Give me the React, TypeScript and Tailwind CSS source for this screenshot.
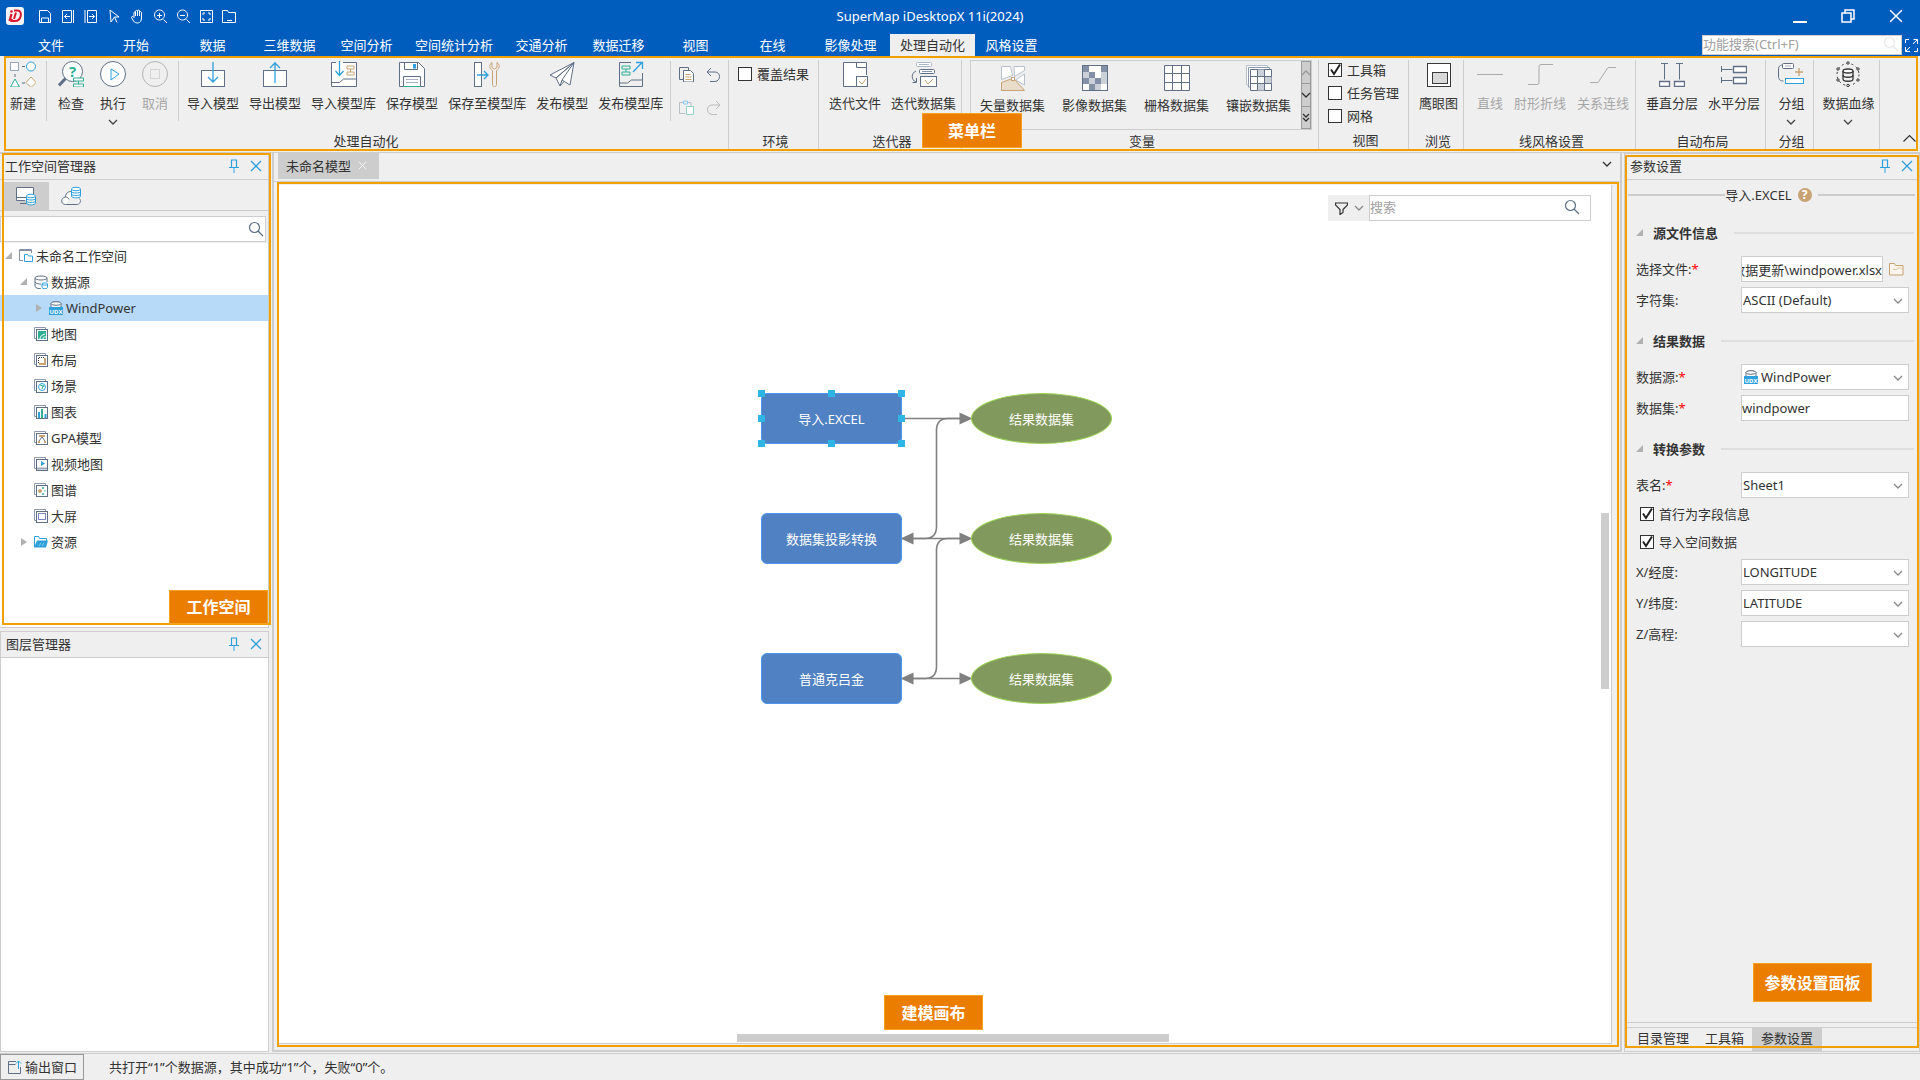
import React, { useState } from 'react'

const SLATE = '#5f6f86'
const BLUE = '#2ea0dc'
const GREEN = '#2fae94'
const TAN = '#c9a273'

interface SvgProps {
  size?: number;
  children: React.ReactNode;
  className?: string;
}

const Svg: React.FC<SvgProps> = ({ size = 26, children, className = '' }) => (
  <svg width={size} height={size} viewBox={`0 0 ${size} ${size}`} fill="none" stroke={SLATE} className={`shrink-0 ${className}`} aria-hidden="true">
    {children}
  </svg>
)

// ---------- small shared icons ----------

const Chevron: React.FC<{ color?: string; className?: string }> = ({ color = '#888', className = '' }) => (
  <svg width="10" height="6" viewBox="0 0 10 6" fill="none" stroke={color} strokeWidth="1.3" className={`shrink-0 ${className}`} aria-hidden="true">
    <path d="M1 1l4 4 4-4" />
  </svg>
)

const SearchIcon: React.FC<{ color?: string; className?: string }> = ({ color = SLATE, className = '' }) => (
  <Svg size={16} className={className}>
    <circle cx="6.5" cy="6.5" r="5" stroke={color} strokeWidth="1.2" />
    <path d="M10 10l5 5" stroke={color} strokeWidth="1.3" />
  </Svg>
)

const PinIcon = () => (
  <Svg size={14}>
    <path d="M4 1h6M4.500 1v7M9.500 1v7M2 8.500h10" stroke={BLUE} strokeWidth="1.2" />
    <path d="M7 9v5" stroke="#8ccbf0" strokeWidth="2" />
  </Svg>
)

const CloseIcon: React.FC<{ color?: string; size?: number }> = ({ color = BLUE, size = 12 }) => (
  <svg width={size} height={size} viewBox="0 0 12 12" fill="none" stroke={color} strokeWidth="1.3" aria-hidden="true">
    <path d="M1 1l10 10M11 1L1 11" />
  </svg>
)

const UdxIcon = () => (
  <Svg size={14}>
    <path d="M2 7V2.500C2 .5 12 .5 12 2.500V7" fill="#fff" />
    <ellipse cx="7" cy="2.500" rx="5" ry="1.800" fill="#fff" />
    <rect x="0" y="6" width="14" height="8" fill={BLUE} stroke="none" />
    <text x="7" y="12.500" fontSize="6" fontWeight="bold" textAnchor="middle" fill="#fff" stroke="none">UDX</text>
  </Svg>
)

// ---------- ribbon icons ----------

const icons: Record<string, React.ReactNode> = {
  create: (
    <Svg>
      <rect x="0.500" y="1.500" width="8" height="8" stroke="#9aa6b5" fill="#fff" />
      <circle cx="21" cy="5.500" r="4.500" stroke={BLUE} fill="#fff" />
      <path d="M12 5.500h3M5 13v3M12 22h3" />
      <path d="M5 18l-4.500 8h9z" stroke={GREEN} fill="#fff" />
      <path d="M21 16l5 5.500-5 5-5-5z" stroke={TAN} fill="#fff" />
    </Svg>
  ),
  check: (
    <Svg>
      <circle cx="14.500" cy="10.500" r="10" fill="#fff" />
      <path d="M7.500 17.500L1 24.500" strokeWidth="3" />
      <text x="14.500" y="16" fontSize="15" fontWeight="bold" textAnchor="middle" fill={GREEN} stroke="none">?</text>
      <path d="M15.500 17h10v3h-10zM15.500 23h10v3h-10zM20.500 20v3" stroke={GREEN} fill="#fff" />
    </Svg>
  ),
  run: (
    <Svg>
      <circle cx="13" cy="13" r="12.500" fill="#fff" />
      <path d="M11 8l8 5-8 6z" stroke={BLUE} />
    </Svg>
  ),
  cancel: (
    <Svg>
      <circle cx="13" cy="13" r="12.500" stroke="#b4b4b4" />
      <rect x="8.500" y="8.500" width="9" height="9" stroke="#d4d4d4" />
    </Svg>
  ),
  importModel: (
    <Svg>
      <rect x="1.500" y="9.500" width="23" height="16" fill="#fff" />
      <path d="M13 1v20M8 16l5 5 5-5" stroke={BLUE} strokeWidth="1.300" />
    </Svg>
  ),
  exportModel: (
    <Svg>
      <rect x="1.500" y="9.500" width="23" height="16" fill="#fff" />
      <path d="M13 22V1M8 7l5-5 5 5" stroke={BLUE} strokeWidth="1.300" />
    </Svg>
  ),
  importLib: (
    <Svg>
      <path d="M5 1.500H.5v24h25v-24H12" fill="#fff" />
      <path d="M.5 21.500h8l4-3.500h13" />
      <path d="M8.500 0v14M4.500 10l4 4.500 4-4.500" stroke={BLUE} strokeWidth="1.300" />
      <path d="M16 5h7v3h-7zM16 11h7v3h-7zM19.500 8v3" stroke={TAN} />
    </Svg>
  ),
  save: (
    <Svg>
      <path d="M.5 1.500h19l6 6v18H.5z" fill="#fff" />
      <path d="M5.500 1.500v7h13v-7M4.500 25.500v-10h17v10" />
      <rect x="14" y="3" width="3" height="4.500" fill={BLUE} stroke="none" />
      <path d="M7 18.500h12M7 21.500h12" stroke="#aab4c2" />
      <path d="M4 25.500h18" stroke={GREEN} />
    </Svg>
  ),
  saveLib: (
    <Svg>
      <rect x="0.500" y="1.500" width="7" height="24" fill="#fff" />
      <path d="M3 14h10M10 10l4 4-4 4" stroke={BLUE} strokeWidth="1.300" />
      <path d="M18 1.500c-3 2-3 6 .5 8v14c0 3 4 3 4 0v-14c3.500-2 3.500-6 .5-8v5l-2.500 1.500L18 6.500z" stroke={TAN} />
    </Svg>
  ),
  publish: (
    <Svg>
      <path d="M25 1.500L1 14l6 3zM25 1.500L13 19l8 5zM25 1.500L7 17l4 8 2-6" fill="#fff" />
      <path d="M11 25l4-4.500" />
    </Svg>
  ),
  publishLib: (
    <Svg>
      <path d="M13 1.500H1.500v24h23V12" />
      <path d="M1.500 22h8l4-3h11" />
      <path d="M4 5h8v3H4zM4 11h8v3H4zM8 8v3" stroke={GREEN} />
      <path d="M15 11l9-9.500M18 1.500h6.500V8" stroke={BLUE} strokeWidth="1.300" />
    </Svg>
  ),
  iterFile: (
    <Svg>
      <path d="M14 25.500H1.500v-24h23V14" fill="#fff" />
      <path d="M14.500 1.500v5h10" />
      <rect x="14.500" y="15.500" width="11" height="10" fill="#fff" />
      <path d="M17 20l3 3 4-5" stroke={TAN} />
    </Svg>
  ),
  iterData: (
    <Svg>
      <rect x="5.500" y="1.500" width="15" height="4" rx="1" stroke="#aab8c8" fill="#fff" />
      <path d="M8 3.500h10" stroke="#aab8c8" />
      <rect x="8.500" y="8.500" width="15" height="4" rx="1" fill="#fff" />
      <path d="M11 10.500h10" stroke="#8393aa" />
      <rect x="9.500" y="15.500" width="16" height="10" fill="#fff" />
      <path d="M14 19l3 4 5-5" stroke={TAN} />
      <path d="M5 10c-5 2-5 9 0 11M5.500 17v4.500H1.500" />
    </Svg>
  ),
  vector: (
    <Svg>
      <path d="M1.500 1.500h9l2 9-11 4zM14 1.500h10.500v4l-10 6zM24.500 9v11l-9-5z" stroke="#b6c0cc" fill="#fff" />
      <path d="M1.500 17.500l11-4 3 2 9 10h-23z" stroke={TAN} fill="#eadccb" />
      <rect x="11.500" y="12.500" width="3" height="3" stroke={TAN} fill="#fff" />
    </Svg>
  ),
  image: (
    <Svg>
      <rect x="0.500" y="0.500" width="25" height="25" fill="#fff" />
      <path d="M1 1h6v6H1zM19 1h6v6h-6zM7 7h6v6H7zM1 13h6v6H1zM13 13h6v6h-6zM7 19h6v6H7z" fill="#8390a5" stroke="none" />
      <path d="M7 13h6v6H7zM19 7h6v6h-6zM1 7h6v6H1zM13 19h6v6h-6zM19 13h6v6h-6z" fill="#ccd0d8" stroke="none" />
    </Svg>
  ),
  raster: (
    <Svg>
      <path d="M.5 .5h25v25H.5zM8.500 .5v25M17.500 .5v25M.5 8.500h25M.5 17.500h25" fill="#fff" />
    </Svg>
  ),
  mosaic: (
    <Svg>
      <path d="M2.500 20h-2V.5h21V3" stroke="#b6c0cc" fill="#fff" />
      <path d="M4.500 22h-2V2.500h21V5" stroke="#8f9bad" fill="#fff" />
      <path d="M4.500 4.500h21v21h-21z" fill="#fff" />
      <path d="M11.500 4.500h7v7h-7zM18.500 11.500h7v7h-7zM11.500 18.500h7v7h-7z" fill="#ccd0d8" stroke="none" />
      <path d="M11.500 4.500v21M18.500 4.500v21M4.500 11.500h21M4.500 18.500h21" />
    </Svg>
  ),
  eagle: (
    <Svg>
      <rect x="1.500" y="2.500" width="23" height="23" stroke="#3a3a3a" fill="#fff" />
      <rect x="6.500" y="11.500" width="15" height="11" stroke="#3a3a3a" fill="#d9d9d9" />
    </Svg>
  ),
  line: <Svg><path d="M0 13.500h26" stroke="#aaa" /></Svg>,
  elbow: <Svg><path d="M1 23.500h9q2 0 2-2v-16q0-2 2-2h12" stroke="#aaa" /></Svg>,
  relation: <Svg><path d="M0 21.500h8l10-15h8" stroke="#aaa" /></Svg>,
  vertical: (
    <Svg>
      <path d="M2 2.500h7M5.500 2.500v16M17 2.500h7M20.500 2.500v16" />
      <path d="M.5 20.500h10v5H.5zM15.500 20.500h10v5h-10z" fill="#fff" strokeWidth="1.300" />
    </Svg>
  ),
  horizontal: (
    <Svg>
      <path d="M.5 5v6M.5 8.500h11M.5 16v6M.5 19.500h11" />
      <path d="M12.500 5.500h13v6h-13zM12.500 16.500h13v6h-13z" fill="#fff" strokeWidth="1.300" />
    </Svg>
  ),
  group: (
    <Svg>
      <path d="M5 4C1 4 .5 6 .5 9v6c0 4 2 5 5 5" />
      <rect x="4.500" y="2.500" width="11" height="5" rx="1" fill="#fff" />
      <path d="M7 5h6" stroke="#aab4c2" />
      <rect x="7.500" y="17.500" width="18" height="5" stroke={BLUE} fill="#fff" />
      <path d="M21 7v8M17 11h8" stroke={TAN} strokeWidth="1.300" />
    </Svg>
  ),
  lineage: (
    <Svg>
      <circle cx="13" cy="13.500" r="11" stroke="#333" strokeDasharray="2 3" />
      <path d="M8 10v8c0 3 10 3 10 0v-8" stroke="#333" fill="#efefef" strokeWidth="1.300" />
      <ellipse cx="13" cy="10" rx="5" ry="2" stroke="#333" fill="#fff" strokeWidth="1.300" />
      <path d="M8 14c0 3 10 3 10 0" stroke="#333" strokeWidth="1.300" />
      <g stroke="#333" fill="#efefef">
        <circle cx="13" cy="2" r="1.200" />
        <circle cx="13" cy="24.500" r="1.200" />
        <circle cx="3" cy="8" r="1.200" />
        <circle cx="23" cy="8" r="1.200" />
        <circle cx="3" cy="19" r="1.200" />
        <circle cx="23" cy="19" r="1.200" />
      </g>
    </Svg>
  ),
}

// ---------- title bar ----------

const quickTools: { title: string; d: string }[] = [
  { title: '保存', d: 'M1.500 1.500h8l3 3v9h-11zM3.500 13v-4h7v4M10.500 10.500v3' },
  { title: '后退', d: 'M1.500 1.500h9v12h-9zM12.500 1v13M9 7.500H3.500M6 5L3.500 7.500 6 10' },
  { title: '前进', d: 'M3.500 1.500h9v12h-9zM1 1v13M5 7.500h5.500M8 5l2.500 2.500L8 10' },
  { title: '选择', d: 'M3 1l9 7H7.500L4 13zM7.500 8l2.500 5.500' },
  { title: '漫游', d: 'M4 8.500V4c0-1.500 1.500-1.500 1.500 0v3M5.500 7V2.500c0-1.500 2-1.500 2 0V7M7.500 7V2c0-1.300 2-1.300 2 0v5M9.500 7V3.500c0-1.300 1.500-1.300 2 0V9c0 6-6 6-8 3L1.500 8.500c0-1.500 1.500-1.500 2.500 0' },
  { title: '放大', d: 'M6.500 1a5 5 0 1 0 .01 0M10.500 10.500l3.500 3.500M6.500 4v5M4 6.500h5' },
  { title: '缩小', d: 'M6.500 1a5 5 0 1 0 .01 0M10.500 10.500l3.500 3.500M4 6.500h5' },
  { title: '全幅', d: 'M1.500 1.500h12v12h-12zM4 6V4h2M9 4h2v2M11 9v2H9M6 11H4V9' },
  { title: '打开', d: 'M.5 13.500v-12h5l1 2h7v10zM5 11.500h5' },
]

const menuTabs = [
  { name: '文件', width: 'w-[94px]' },
  { name: '开始', width: 'w-[76px]' },
  { name: '数据', width: 'w-[77px]' },
  { name: '三维数据', width: 'w-[77px]' },
  { name: '空间分析', width: 'w-[77px]' },
  { name: '空间统计分析', width: 'w-[98px]' },
  { name: '交通分析', width: 'w-[77px]' },
  { name: '数据迁移', width: 'w-[77px]' },
  { name: '视图', width: 'w-[77px]' },
  { name: '在线', width: 'w-[77px]' },
  { name: '影像处理', width: 'w-[79px]' },
  { name: '处理自动化', width: 'w-[85px]' },
  { name: '风格设置', width: 'w-[73px]' },
]

const TitleBar = () => {
  const [activeTab, setActiveTab] = useState('处理自动化')
  return (
    <header className="bg-[#005dbe] text-white">
      <div className="flex h-[34px] items-center pb-[2px]">
        <div className="flex w-[250px] items-center pl-[6px]">
          <svg width="18" height="18" viewBox="0 0 18 18" className="mr-[14px]" aria-hidden="true">
            <rect width="18" height="18" rx="3" fill="#f4f4f6" />
            <path d="M8 3.500h3.500c5.500 0 4 10.500-2.500 10.500H5.500l.5-2M10 5.500L8 12" fill="none" stroke="#d9142b" strokeWidth="2" />
            <path d="M5.500 7L3.500 14" fill="none" stroke="#d9142b" strokeWidth="2.200" />
            <circle cx="5.500" cy="4.500" r="1.300" fill="#d9142b" />
          </svg>
          <div className="flex gap-2">
            {quickTools.map((tool) => (
              <button key={tool.title} title={tool.title} aria-label={tool.title}>
                <svg width="15" height="15" viewBox="0 0 15 15" fill="none" stroke="#fff" strokeWidth="1" aria-hidden="true">
                  <path d={tool.d} />
                </svg>
              </button>
            ))}
          </div>
        </div>
        <h1 className="flex-1 text-center">SuperMap iDesktopX 11i(2024)</h1>
        <div className="flex w-[310px] items-center justify-end gap-[34px] pr-[17px]">
          <button aria-label="最小化" className="flex h-[14px] w-[14px] items-end">
            <span className="h-[2px] w-full bg-white" />
          </button>
          <button aria-label="还原">
            <svg width="14" height="14" viewBox="0 0 14 14" fill="none" stroke="#fff" strokeWidth="1.500" aria-hidden="true">
              <path d="M1 4h9v9H1zM4 4V1h9v9h-3" />
            </svg>
          </button>
          <button aria-label="关闭"><CloseIcon color="#fff" size={14} /></button>
        </div>
      </div>
      <div className="flex h-[22px] pl-1">
        <nav className="flex flex-1">
          {menuTabs.map((tab) => (
            <button
              key={tab.name}
              onClick={() => setActiveTab(tab.name)}
              className={`${tab.width} h-[22px] leading-[22px] whitespace-nowrap ${activeTab === tab.name ? 'bg-[#efefef] text-[#333]' : ''}`}
            >
              {tab.name}
            </button>
          ))}
        </nav>
        <label className="mt-px mr-[3px] flex h-5 w-[200px] items-center border border-[#cdcdcd] bg-white pr-[2px] pb-[2px]">
          <input aria-label="功能搜索" placeholder="功能搜索(Ctrl+F)" className="min-w-0 flex-1 text-[#333] outline-none placeholder:text-[#a0a0a0]" />
          <SearchIcon color="#e8e8e8" />
        </label>
        <button aria-label="全屏" className="mr-[2px]">
          <svg width="13" height="13" viewBox="0 0 13 13" fill="none" stroke="#fff" aria-hidden="true">
            <path d="M.5 4V.5H4M8.500 .5h4V5M12.500 9v3.500H9M5 12.500H.5V8M8 5l4.500-4.500M.5 12.500L5 8" />
          </svg>
        </button>
      </div>
    </header>
  )
}

// ---------- annotations ----------

const Frame: React.FC<{ className: string }> = ({ className }) => (
  <div className={`pointer-events-none absolute z-10 border-2 border-[#f0a000] ${className}`} />
)

const Tag: React.FC<{ className: string; children: React.ReactNode }> = ({ className, children }) => (
  <div className={`absolute z-20 flex items-center justify-center border border-[#f5a21e] bg-[#eb7d00] text-base font-bold text-white ${className}`}>
    {children}
  </div>
)

// ---------- ribbon ----------

interface RibbonButtonProps {
  icon: string;
  label: string;
  disabled?: boolean;
  dropdown?: boolean;
}

const RibbonButton: React.FC<RibbonButtonProps> = ({ icon, label, disabled, dropdown }) => (
  <button disabled={disabled} className={`flex shrink-0 flex-col items-center whitespace-nowrap ${disabled ? 'text-[#a6a6a6]' : ''}`}>
    {icons[icon]}
    <span className="mt-[6px] leading-5">{label}</span>
    {dropdown && <Chevron color="#444" className="mt-[6px]" />}
  </button>
)

const RibbonGroup: React.FC<{ label?: string; className: string; children: React.ReactNode }> = ({ label, className, children }) => (
  <section className="flex h-[89px] shrink-0 flex-col border-r border-[#cdcdcd]">
    <div className={`flex h-[71px] items-start pt-px ${className}`}>{children}</div>
    <div className="h-[18px] pl-1 text-center leading-5">{label}</div>
  </section>
)

const ShortLine: React.FC<{ className: string }> = ({ className }) => (
  <div className={`h-[60px] w-px shrink-0 bg-[#cdcdcd] ${className}`} />
)

const Check: React.FC<{ label: string; defaultChecked?: boolean }> = ({ label, defaultChecked }) => (
  <label className="flex items-center gap-[5px] whitespace-nowrap">
    <span className="relative flex h-[14px] w-[14px]">
      <input type="checkbox" defaultChecked={defaultChecked} className="peer h-[14px] w-[14px] appearance-none border border-[#333] bg-white" />
      <svg width="14" height="14" viewBox="0 0 14 14" fill="none" stroke="#222" className="pointer-events-none absolute inset-0 hidden peer-checked:block" aria-hidden="true">
        <path d="M3 6.500L6 11 12 1.500" strokeWidth="2" />
      </svg>
    </span>
    {label}
  </label>
)

const variables = [
  { icon: 'vector', label: '矢量数据集' },
  { icon: 'image', label: '影像数据集' },
  { icon: 'raster', label: '栅格数据集' },
  { icon: 'mosaic', label: '镶嵌数据集' },
]

const Ribbon = () => (
  <div className="relative flex h-[97px] border-b border-[#cdcdcd] py-1">
    <RibbonGroup label="处理自动化" className="w-[728px] pl-[10px]">
      <RibbonButton icon="create" label="新建" />
      <ShortLine className="ml-[10px]" />
      <div className="ml-[11px] flex gap-4">
        <RibbonButton icon="check" label="检查" />
        <RibbonButton icon="run" label="执行" dropdown />
        <RibbonButton icon="cancel" label="取消" disabled />
      </div>
      <ShortLine className="ml-[10px]" />
      <div className="ml-2 flex gap-[10px]">
        <RibbonButton icon="importModel" label="导入模型" />
        <RibbonButton icon="exportModel" label="导出模型" />
        <RibbonButton icon="importLib" label="导入模型库" />
        <RibbonButton icon="save" label="保存模型" />
        <RibbonButton icon="saveLib" label="保存至模型库" />
        <RibbonButton icon="publish" label="发布模型" />
        <RibbonButton icon="publishLib" label="发布模型库" />
      </div>
      <ShortLine className="ml-[7px]" />
      <div className="ml-2 grid grid-cols-2 gap-x-3 gap-y-[18px] pt-[6px]">
        <button aria-label="复制">
          <Svg size={15}>
            <path d="M4 12.500H.5V.5h9V3" />
            <path d="M4.500 3.500h7l3 3v8.500h-10z" fill="#fff" />
            <path d="M6.500 7.500h5M6.500 10h6M6.500 12.500h6" stroke={TAN} />
          </Svg>
        </button>
        <button aria-label="撤销">
          <Svg size={15}><path d="M5 1L1 5l4 4M1 5h8c6 0 6 9 0 9.500H4" /></Svg>
        </button>
        <button aria-label="粘贴">
          <Svg size={15}>
            <path d="M5 2.500H.5v11H6M9 2.500h3V6" stroke="#b8bfc9" />
            <path d="M4.500 1h4v3h-4z" stroke="#8ccbf0" />
            <path d="M7.500 6.500h7v8h-7z" stroke="#93d3c5" fill="#fff" />
          </Svg>
        </button>
        <button aria-label="重做">
          <Svg size={15}><path d="M10 1l4 4-4 4M14 5H6c-6 0-6 9 0 9.500h5" stroke="#bbb" /></Svg>
        </button>
      </div>
    </RibbonGroup>
    <RibbonGroup label="环境" className="w-[89px] pl-[9px]">
      <div className="pt-[3px]"><Check label="覆盖结果" /></div>
    </RibbonGroup>
    <RibbonGroup label="迭代器" className="w-[142px] gap-[10px] pl-[10px]">
      <RibbonButton icon="iterFile" label="迭代文件" />
      <RibbonButton icon="iterData" label="迭代数据集" />
    </RibbonGroup>
    <RibbonGroup label="变量" className="w-[356px] pl-2">
      <div className="-mt-px flex h-[70px] w-[342px] border border-[#cdcdcd]">
        <div className="flex flex-1 items-start gap-[17px] pt-1 pl-[9px]">
          {variables.map((item) => (
            <button key={item.label} className="flex flex-col items-center whitespace-nowrap">
              {icons[item.icon]}
              <span className="mt-1 leading-5">{item.label}</span>
            </button>
          ))}
        </div>
        <div className="flex w-[10px] flex-col divide-y divide-[#9a9a9a] border border-[#9a9a9a] bg-[#cdcdcd]">
          <button aria-label="上一行" className="flex flex-1 items-center justify-center"><Chevron color="#999" className="rotate-180" /></button>
          <button aria-label="下一行" className="flex flex-1 items-center justify-center"><Chevron color="#333" /></button>
          <button aria-label="展开" className="flex flex-1 flex-col items-center justify-center">
            <svg width="8" height="9" viewBox="0 0 8 9" fill="none" stroke="#333" strokeWidth="1.300" aria-hidden="true"><path d="M1 1l3 3 3-3M1 5l3 3 3-3" /></svg>
          </button>
        </div>
      </div>
    </RibbonGroup>
    <RibbonGroup label="视图" className="-mt-px w-[89px] flex-col gap-[3px] pl-[9px]">
      <Check label="工具箱" defaultChecked />
      <Check label="任务管理" />
      <Check label="网格" />
    </RibbonGroup>
    <RibbonGroup label="浏览" className="w-[54px] pl-[10px]">
      <RibbonButton icon="eagle" label="鹰眼图" />
    </RibbonGroup>
    <RibbonGroup label="线风格设置" className="w-[171px] gap-[11px] pl-[13px]">
      <RibbonButton icon="line" label="直线" disabled />
      <RibbonButton icon="elbow" label="肘形折线" disabled />
      <RibbonButton icon="relation" label="关系连线" disabled />
    </RibbonGroup>
    <RibbonGroup label="自动布局" className="w-[129px] gap-[10px] pl-[10px]">
      <RibbonButton icon="vertical" label="垂直分层" />
      <RibbonButton icon="horizontal" label="水平分层" />
    </RibbonGroup>
    <RibbonGroup label="分组" className="w-[47px] justify-center pl-1">
      <RibbonButton icon="group" label="分组" dropdown />
    </RibbonGroup>
    <RibbonGroup className="w-[65px] justify-center pl-1">
      <RibbonButton icon="lineage" label="数据血缘" dropdown />
    </RibbonGroup>
    <div className="flex flex-1 items-end justify-end pr-1 pb-[6px]">
      <button aria-label="收起功能区">
        <svg width="13" height="8" viewBox="0 0 13 8" fill="none" stroke="#333" strokeWidth="1.200" aria-hidden="true"><path d="M.5 7.500l6-6 6 6" /></svg>
      </button>
    </div>
    <Frame className="top-0 right-[2px] bottom-px left-1" />
    <Tag className="top-[57px] left-[922px] h-[35px] w-[100px]">菜单栏</Tag>
  </div>
)

// ---------- left side ----------

const PanelHeader: React.FC<{ title: string }> = ({ title }) => (
  <div className="flex h-[26px] shrink-0 items-center border-b border-[#cdcdcd] bg-[#efefef] pr-[6px] pb-px pl-[5px]">
    <h2 className="flex-1">{title}</h2>
    <button aria-label="固定" className="mr-[9px]"><PinIcon /></button>
    <button aria-label="关闭"><CloseIcon /></button>
  </div>
)

const Arrow: React.FC<{ open?: boolean }> = ({ open }) => (
  <svg width="8" height="8" viewBox="0 0 8 8" fill="#b0b0b0" className="shrink-0" aria-hidden="true">
    {open ? <path d="M8 0v7H1z" /> : <path d="M2 0l6 4-6 4z" />}
  </svg>
)

// stacked page used by most of the tree nodes
const PageIcon: React.FC<{ children: React.ReactNode }> = ({ children }) => (
  <Svg size={14}>
    <path d="M2.500 11.500h-2V.5h11v2" stroke="#8f9bad" />
    <rect x="2.500" y="2.500" width="11" height="11" fill="#fff" />
    {children}
  </Svg>
)

interface TreeItem {
  label: string;
  indent: string;
  arrow?: 'open' | 'closed';
  icon: React.ReactNode;
}

const tree: TreeItem[] = [
  {
    label: '未命名工作空间', indent: 'pl-1', arrow: 'open',
    icon: <Svg size={14}><path d="M4 11.500H.5v-11h12V4M.5 1.500h12" stroke="#8390a5" /><path d="M5.500 12.500v-7h3l1 1.500h4v5.500z" stroke={BLUE} fill="#fff" /></Svg>,
  },
  {
    label: '数据源', indent: 'pl-[19px]', arrow: 'open',
    icon: <Svg size={14}><path d="M1 3v8c0 3 6 2.500 6 2.500M13 3v4M1 7c1 2 5 2 6 2" /><ellipse cx="7" cy="3" rx="6" ry="2" fill="#fff" /><path d="M8 9v3.500c0 1.500 5.500 1.500 5.500 0V9M8 9c0-1.500 5.500-1.500 5.500 0s-5.500 1.500-5.500 0" stroke={BLUE} /></Svg>,
  },
  { label: 'WindPower', indent: 'pl-[34px]', arrow: 'closed', icon: <UdxIcon /> },
  { label: '地图', indent: 'pl-[19px]', icon: <PageIcon><path d="M4 4h8v8H4z" fill={GREEN} stroke="none" /><path d="M6 12c0-3 2-4 5-5M9 12c0-2 1-2 3-2" stroke="#fff" /></PageIcon> },
  { label: '布局', indent: 'pl-[19px]', icon: <PageIcon><path d="M4.500 10V4.500H10" strokeDasharray="1 1" stroke="#333" /><path d="M5 11h6V5" stroke={TAN} strokeWidth="2" /></PageIcon> },
  { label: '场景', indent: 'pl-[19px]', icon: <PageIcon><circle cx="8" cy="8" r="3.500" stroke={BLUE} /><path d="M6 6l3 1-1 3M9 6l1 2" stroke={GREEN} /></PageIcon> },
  { label: '图表', indent: 'pl-[19px]', icon: <PageIcon><path d="M5 7v6M11.500 9v4" stroke={BLUE} strokeWidth="2" /><path d="M8 4v9" stroke={GREEN} strokeWidth="2" /></PageIcon> },
  { label: 'GPA模型', indent: 'pl-[19px]', icon: <PageIcon><path d="M5 5h6M4 11h2M10 11h2" stroke={TAN} strokeWidth="2" /><path d="M8 6L5 10M8 6l3 4" /></PageIcon> },
  { label: '视频地图', indent: 'pl-[19px]', icon: <PageIcon><path d="M7 4l4 2.500L7 9z" fill={BLUE} stroke="none" /><path d="M3 11.500h10" stroke="#9aa6b5" strokeWidth="2" /></PageIcon> },
  { label: '图谱', indent: 'pl-[19px]', icon: <PageIcon><circle cx="6" cy="8" r="2" fill={TAN} stroke="none" /><circle cx="9" cy="5" r="1" fill={GREEN} stroke="none" /><circle cx="11" cy="8" r="1" fill="#93d3c5" stroke="none" /><circle cx="9" cy="11" r="1" fill={GREEN} stroke="none" /></PageIcon> },
  { label: '大屏', indent: 'pl-[19px]', icon: <PageIcon><rect x="4.500" y="4.500" width="7" height="6" stroke="#7b86c6" /></PageIcon> },
  {
    label: '资源', indent: 'pl-[19px]', arrow: 'closed',
    icon: <Svg size={14}><path d="M.5 12V1.500h4l1 2h7V6" stroke={BLUE} fill="#fff" /><path d="M0 12.500L3 5.500h11l-2 7z" fill={BLUE} stroke="none" /><path d="M5 11l2-3M8 11l2-3" stroke="#8ccbf0" /></Svg>,
  },
]

const WorkspacePanel = () => {
  const [selected, setSelected] = useState('WindPower')
  return (
    <section className="relative flex flex-[53_1_0%] flex-col border border-l-0 border-[#cdcdcd] bg-white">
      <PanelHeader title="工作空间管理器" />
      <div className="flex h-[31px] border-b border-[#cdcdcd] bg-[#efefef] pt-[2px] pl-[3px]">
        <button aria-label="本地" className="flex w-[46px] items-center justify-center bg-[#cdcdcd]">
          <Svg size={20}>
            <path d="M9 14.500H.5v-13h17V8M.5 11.500H10M4 17.500h7" fill="#fff" />
            <path d="M10.500 10v7c0 2.500 9 2.500 9 0v-7M10.500 12.500c0 2 9 2 9 0M10.500 15c0 2 9 2 9 0" stroke={BLUE} fill="#fff" />
            <ellipse cx="15" cy="10" rx="4.500" ry="1.800" stroke={BLUE} fill="#fff" />
          </Svg>
        </button>
        <button aria-label="在线" className="flex w-11 items-center justify-center">
          <Svg size={20}>
            <path d="M4.500 18.500c-5 0-5-7 0-7.500 0-5 5-7 8-4M15 18.500H4.500M15 18.500c5 0 5-4 3.500-6M4.500 11c2 0 3 1 3.500 2.500" fill="#fff" />
            <path d="M10.500 3v7c0 2.500 9 2.500 9 0V3M10.500 5.500c0 2 9 2 9 0M10.500 8c0 2 9 2 9 0" stroke={BLUE} fill="#fff" />
            <ellipse cx="15" cy="3" rx="4.500" ry="1.800" stroke={BLUE} fill="#fff" />
          </Svg>
        </button>
      </div>
      <div className="bg-[#efefef] pt-[5px] pr-[2px] pb-px">
        <label className="flex h-[26px] items-center border border-[#cdcdcd] bg-white pr-px">
          <input aria-label="搜索工作空间" className="min-w-0 flex-1 pl-1 outline-none" />
          <SearchIcon />
        </label>
      </div>
      <ul className="flex-1 overflow-hidden">
        {tree.map((item) => (
          <li key={item.label}>
            <button
              onClick={() => setSelected(item.label)}
              className={`flex h-[26px] w-full items-center ${item.indent} ${selected === item.label ? 'bg-[#b7daf8]' : ''}`}
            >
              <span className="w-[15px] shrink-0">{item.arrow && <Arrow open={item.arrow === 'open'} />}</span>
              {item.icon}
              <span className="ml-[3px]">{item.label}</span>
            </button>
          </li>
        ))}
      </ul>
      <Frame className="-top-px -right-[3px] bottom-[2px] left-[2px]" />
      <Tag className="right-0 bottom-[3px] h-[34px] w-[99px]">工作空间</Tag>
    </section>
  )
}

// ---------- canvas ----------

const processNodes = [
  { label: '导入.EXCEL', place: 'top-[208px]', selected: true },
  { label: '数据集投影转换', place: 'top-[328px]' },
  { label: '普通克吕金', place: 'top-[468px]' },
]

const handles = [
  '-top-1 -left-1',
  '-top-1 left-[66px]',
  '-top-1 -right-1',
  'top-[21px] -left-1',
  'top-[21px] -right-1',
  '-bottom-1 -left-1',
  '-bottom-1 left-[66px]',
  '-bottom-1 -right-1',
]

const ModelCanvas = () => (
  <div className="relative min-h-0 flex-1 pt-[3px] pr-2 pb-[6px] pl-[5px]">
    <div className="relative h-full overflow-hidden border-r border-b border-[#cdcdcd] bg-white">
      <svg width="800" height="600" className="absolute top-0 left-0" fill="none" stroke="#808080" strokeWidth="1.600" aria-hidden="true">
        <path d="M623 233.500h58M634 353.500h47M634 493.500h47" />
        <path d="M634 353.500h12q11.500 0 11.500-12v-96q0-12 11.500-12h12" />
        <path d="M634 493.500h12q11.500 0 11.500-12v-116q0-12 11.500-12h12" />
        <path d="M680.500 227.500l13 6-13 6zM680.500 347.500l13 6-13 6zM680.500 487.500l13 6-13 6zM634.500 347.500l-13 6 13 6zM634.500 487.500l-13 6 13 6z" fill="#808080" stroke="none" />
      </svg>
      {processNodes.map((node) => (
        <div key={node.label} className={`absolute left-[482px] flex h-[51px] w-[141px] items-center justify-center rounded-md border border-[#4a96f0] bg-[#5081c2] text-white ${node.place}`}>
          {node.label}
          {node.selected && handles.map((pos) => <span key={pos} className={`absolute h-[7px] w-[7px] bg-[#2fb4e6] ${pos}`} />)}
        </div>
      ))}
      {processNodes.map((node) => (
        <div key={node.label} className={`absolute left-[692px] flex h-[51px] w-[141px] items-center justify-center rounded-[50%] border border-[#9bd354] bg-[#82995d] text-white ${node.place}`}>
          结果数据集
        </div>
      ))}
      <div className="absolute top-[10px] right-5 flex h-[26px] w-[263px]">
        <button aria-label="筛选" className="flex w-[41px] items-center gap-[6px] bg-[#efefef] pl-[7px]">
          <svg width="13" height="13" viewBox="0 0 13 13" fill="none" stroke="#333" strokeWidth="1.200" aria-hidden="true"><path d="M.5 1h12v2L8 7.500v3L5 12.500v-5L.5 3z" /></svg>
          <Chevron />
        </button>
        <label className="flex min-w-0 flex-1 items-center border border-[#cdcdcd] bg-white pr-[10px] pb-[2px]">
          <input aria-label="搜索" placeholder="搜索" className="min-w-0 flex-1 outline-none placeholder:text-[#a0a0a0]" />
          <SearchIcon />
        </label>
      </div>
      <div className="absolute top-[328px] right-[2px] h-[176px] w-2 bg-[#cdcdcd]" />
      <div className="absolute bottom-px left-[458px] h-2 w-[432px] bg-[#cdcdcd]" />
      <Tag className="bottom-[13px] left-[605px] h-[35px] w-[99px]">建模画布</Tag>
    </div>
    <Frame className="top-0 right-px bottom-[3px] left-[3px]" />
  </div>
)

const CanvasPane = () => (
  <main className="ml-[3px] flex min-w-0 flex-1 flex-col border-x-2 border-b-2 border-[#cdcdcd]">
    <div className="flex h-[29px] items-start border-b border-[#cdcdcd]">
      <div className="ml-1 flex h-[26px] w-[101px] items-center justify-between bg-[#cdcdcd] pr-3 pb-px pl-2 whitespace-nowrap">
        未命名模型
        <button aria-label="关闭"><CloseIcon color="#f4f4f4" size={9} /></button>
      </div>
      <button aria-label="更多" className="mt-2 mr-2 ml-auto"><Chevron color="#333" /></button>
    </div>
    <ModelCanvas />
  </main>
)

// ---------- parameter panel ----------

const Section: React.FC<{ title: string }> = ({ title }) => (
  <div className="flex h-[51px] items-center pt-[5px] pr-[5px] pl-[10px]">
    <Arrow open />
    <h3 className="ml-[10px] font-bold">{title}</h3>
    <div className="ml-4 h-[2px] flex-1 bg-[#dedede]" />
  </div>
)

const Field: React.FC<{ id: string; label: string; required?: boolean; children: React.ReactNode }> = ({ id, label, required, children }) => (
  <div className="flex h-[26px] items-center pr-[10px] pl-[11px]">
    <label htmlFor={id} className="w-[105px] shrink-0">
      {label}:{required && <span className="text-[#f00]">*</span>}
    </label>
    {children}
  </div>
)

const Select: React.FC<{ id: string; value: string; icon?: React.ReactNode }> = ({ id, value, icon }) => (
  <div className="relative min-w-0 flex-1">
    {icon && <span className="pointer-events-none absolute top-[6px] left-[3px]">{icon}</span>}
    <select id={id} defaultValue={value} className={`block h-[26px] w-full appearance-none border border-[#cdcdcd] bg-white outline-none ${icon ? 'pl-[19px]' : 'pl-px'}`}>
      <option value={value}>{value}</option>
    </select>
    <Chevron className="pointer-events-none absolute top-[11px] right-[6px]" />
  </div>
)

const bottomTabs = ['目录管理', '工具箱', '参数设置']

const ParamPanel = () => (
  <aside className="relative ml-[2px] flex w-[296px] shrink-0 flex-col border border-[#cdcdcd]">
    <PanelHeader title="参数设置" />
    <div className="flex h-[25px] items-center pt-[5px] pr-1 pl-[3px]">
      <div className="h-[2px] flex-1 bg-[#cdcdcd]" />
      <span>导入.EXCEL</span>
      <span className="mr-[6px] ml-[6px] flex h-[14px] w-[14px] items-center justify-center rounded-full bg-[#c9a273] text-xs leading-[14px] font-bold text-white">?</span>
      <div className="h-[2px] flex-1 bg-[#cdcdcd]" />
    </div>
    <Section title="源文件信息" />
    <div className="flex flex-col gap-[5px]">
      <Field id="file" label="选择文件" required>
        <input id="file" defaultValue="数据更新\windpower.xlsx" className="h-[26px] w-[142px] border border-[#cdcdcd] bg-white outline-none [direction:rtl]" />
        <button aria-label="浏览文件" className="ml-[6px]">
          <Svg size={15}><path d="M.5 13V1.500h5l1 2h7.500V13z" stroke={TAN} fill="#faf4ec" /><path d="M4 7.500h4l1-1.500h5" stroke="#e2c9a8" /></Svg>
        </button>
      </Field>
      <Field id="charset" label="字符集"><Select id="charset" value="ASCII (Default)" /></Field>
    </div>
    <Section title="结果数据" />
    <div className="flex flex-col gap-[5px]">
      <Field id="datasource" label="数据源" required><Select id="datasource" value="WindPower" icon={<UdxIcon />} /></Field>
      <Field id="dataset" label="数据集" required>
        <input id="dataset" defaultValue="windpower" className="h-[26px] min-w-0 flex-1 border border-[#cdcdcd] bg-white outline-none" />
      </Field>
    </div>
    <Section title="转换参数" />
    <Field id="sheet" label="表名" required><Select id="sheet" value="Sheet1" /></Field>
    <div className="flex flex-col gap-2 pt-[6px] pb-[7px] pl-[15px]">
      <Check label="首行为字段信息" defaultChecked />
      <Check label="导入空间数据" defaultChecked />
    </div>
    <div className="flex flex-1 flex-col gap-[5px] border-b border-[#cdcdcd]">
      <Field id="lng" label="X/经度"><Select id="lng" value="LONGITUDE" /></Field>
      <Field id="lat" label="Y/纬度"><Select id="lat" value="LATITUDE" /></Field>
      <Field id="alt" label="Z/高程"><Select id="alt" value="" /></Field>
    </div>
    <div className="mt-1 flex h-6 border-t border-[#cdcdcd] pl-1">
      {bottomTabs.map((tab) => (
        <button key={tab} className={`pb-1 leading-5 ${tab === '参数设置' ? 'bg-[#cdcdcd] px-[9px]' : 'px-2'}`}>{tab}</button>
      ))}
    </div>
    <Frame className="top-px right-0 bottom-[3px] left-0" />
    <Tag className="right-[47px] bottom-[49px] h-[39px] w-[119px]">参数设置面板</Tag>
  </aside>
)

const App = () => (
  <div className="flex h-screen flex-col overflow-hidden bg-[#efefef] font-['Noto_Sans','Noto_Sans_CJK_SC',sans-serif] text-[13px] leading-5 text-[#333]">
    <TitleBar />
    <Ribbon />
    <div className="flex min-h-0 flex-1 pb-px">
      <div className="flex w-[269px] shrink-0 flex-col gap-[3px]">
        <WorkspacePanel />
        <section className="flex flex-[47_1_0%] flex-col border border-[#cdcdcd] bg-white">
          <PanelHeader title="图层管理器" />
        </section>
      </div>
      <CanvasPane />
      <ParamPanel />
    </div>
    <footer className="flex h-[27px] shrink-0 items-center border-t border-[#cdcdcd]">
      <button className="flex h-[26px] w-[84px] items-center border border-[#999] pb-px pl-[7px]">
        <Svg size={14}>
          <path d="M8 1.500H.5v12h12V7M.5 4.500h7" />
          <path d="M10.500 9V1M8 3.500L10.500 1 13 3.500" stroke={BLUE} />
        </Svg>
        <span className="ml-[3px] whitespace-nowrap">输出窗口</span>
      </button>
      <p className="ml-[25px] pb-px">共打开“1”个数据源，其中成功“1”个，失败“0”个。</p>
    </footer>
  </div>
)

export default App
